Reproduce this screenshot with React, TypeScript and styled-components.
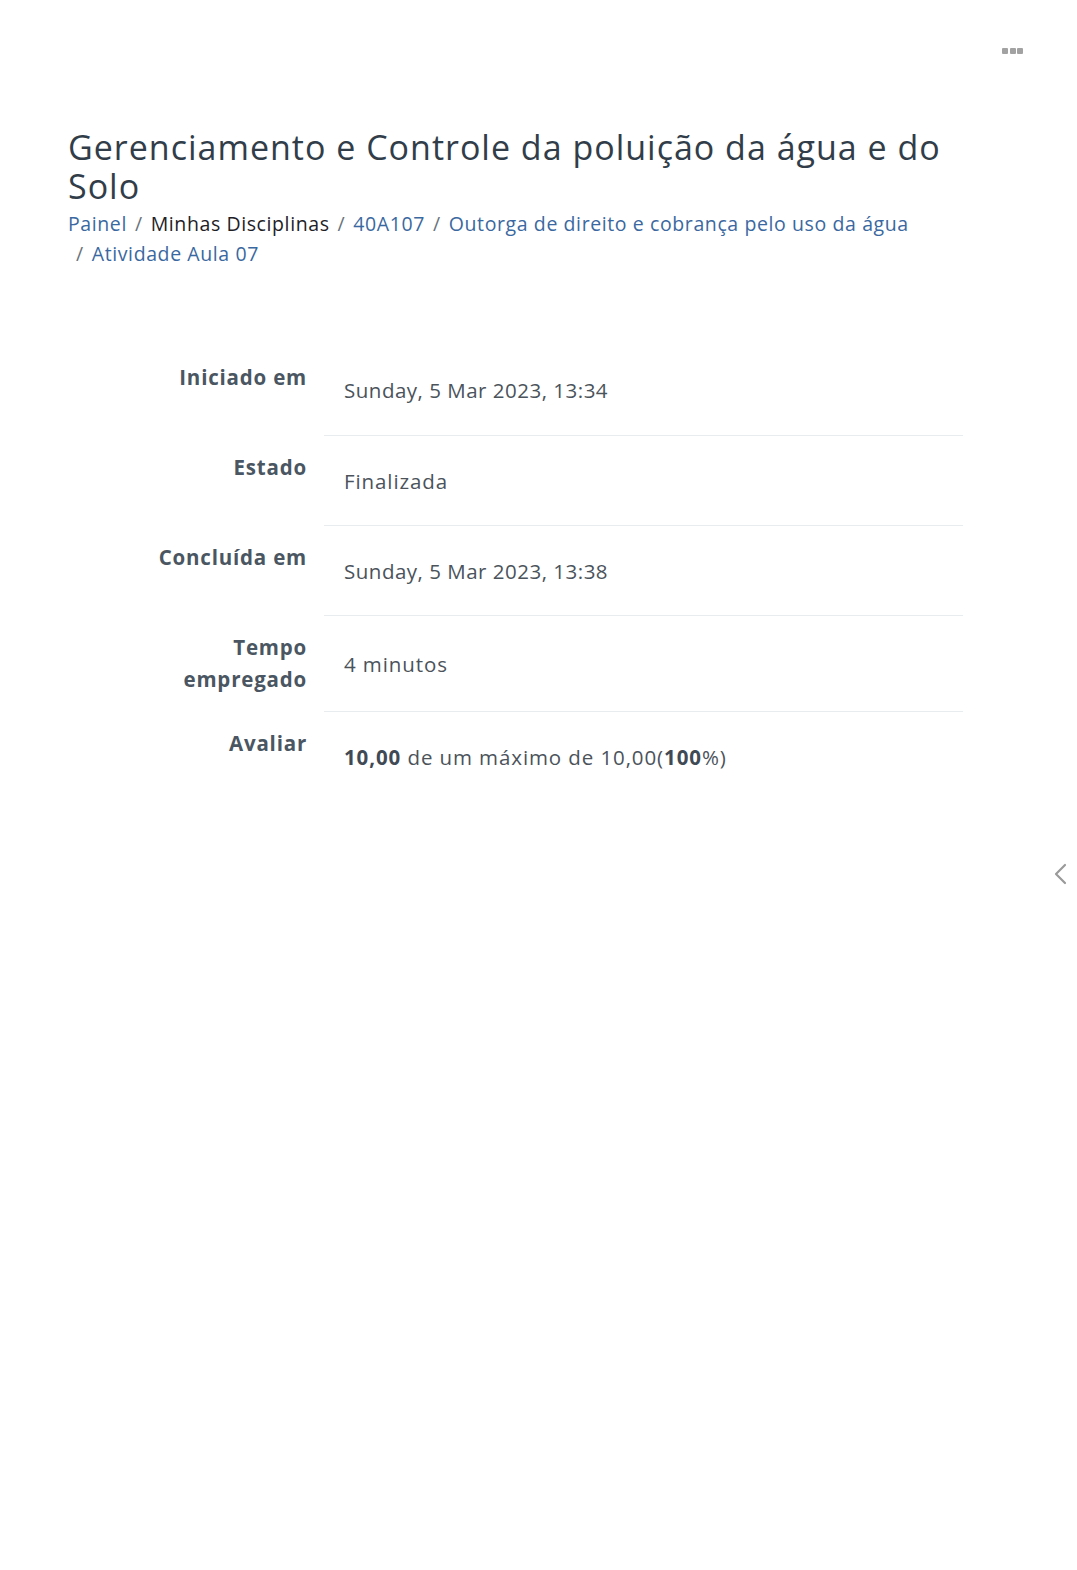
import styled, { createGlobalStyle } from 'styled-components';
import { Fragment } from 'react';

const GlobalStyle = createGlobalStyle`
  html, body {
    margin: 0;
    padding: 0;
    background: #ffffff;
  }
  body {
    font-family: "Open Sans", "Liberation Sans", sans-serif;
    color: #495057;
  }
`;

const Page = styled.div`
  position: relative;
  width: 1077px;
  min-height: 1570px;
  background: #ffffff;
`;

const TopBar = styled.header`
  display: flex;
  justify-content: flex-end;
  padding: 48px 54px 0 0;
  height: 80px;
  box-sizing: border-box;
`;

const DotsButton = styled.button`
  display: flex;
  gap: 1.3px;
  padding: 0;
  border: none;
  background: transparent;
  height: 6px;
  cursor: pointer;
`;

const Dot = styled.span`
  display: block;
  width: 6px;
  height: 6px;
  background: #a2a2a2;
  border-radius: 1px;
`;

const Main = styled.main`
  padding: 48px 114px 0 68px;
`;

const Title = styled.h1`
  margin: 0;
  font-size: 34px;
  line-height: 39px;
  font-weight: 400;
  letter-spacing: 1px;
  color: #313d49;
  max-width: 890px;
`;

const Breadcrumb = styled.ol`
  display: flex;
  flex-wrap: wrap;
  list-style: none;
  margin: 3px 0 0;
  padding: 0;
  font-size: 19.5px;
  line-height: 30px;
  letter-spacing: 0.6px;
  max-width: 880px;
`;

const CrumbItem = styled.li`
  display: flex;
  white-space: nowrap;
`;

const Crumb = styled.span<{ $link?: boolean }>`
  color: ${({ $link }) => ($link ? '#3a68a0' : '#1d2125')};
`;

const Sep = styled.span`
  color: #6a737b;
  padding: 0 8px;
`;

const SummaryTable = styled.div`
  margin: 76px 0 0 72px;
  width: 823px;
  display: grid;
  grid-template-columns: 184px 1fr;
`;

const Label = styled.div`
  text-align: right;
  font-weight: 700;
  font-size: 20.5px;
  line-height: 32px;
  letter-spacing: 0.8px;
  color: #4a5662;
  padding: 16px 17px 16px 0;
`;

const Value = styled.div<{ $first?: boolean; $tight?: boolean }>`
  display: flex;
  align-items: center;
  min-height: 90px;
  box-sizing: border-box;
  padding: 0 20px;
  font-size: 20.5px;
  line-height: 32px;
  letter-spacing: ${({ $tight }) => ($tight ? '0.5px' : '0.9px')};
  color: #4b535b;
  border-top: ${({ $first }) => ($first ? 'none' : '1px solid #e9ecef')};
`;

const Strong = styled.b`
  font-weight: 700;
  color: #3f4a55;
`;

const DrawerToggle = styled.button`
  position: absolute;
  top: 862px;
  right: 8px;
  width: 16px;
  height: 24px;
  padding: 0;
  border: none;
  background: transparent;
  cursor: pointer;
`;

const crumbs = [
  { text: 'Painel', link: true },
  { text: 'Minhas Disciplinas', link: false },
  { text: '40A107', link: true },
  { text: 'Outorga de direito e cobrança pelo uso da água', link: true },
  { text: 'Atividade Aula 07', link: true },
];

const rows: { label: React.ReactNode; value: React.ReactNode; tight?: boolean }[] = [
  { label: 'Iniciado em', value: 'Sunday, 5 Mar 2023, 13:34', tight: true },
  { label: 'Estado', value: 'Finalizada' },
  { label: 'Concluída em', value: 'Sunday, 5 Mar 2023, 13:38', tight: true },
  {
    label: (
      <>
        Tempo
        <br />
        empregado
      </>
    ),
    value: '4 minutos',
  },
  {
    label: 'Avaliar',
    value: (
      <span>
        <Strong>10,00</Strong> de um máximo de 10,00(<Strong>100</Strong>%)
      </span>
    ),
  },
];

export default function App() {
  return (
    <Page>
      <GlobalStyle />
      <TopBar>
        <DotsButton aria-label="Mais">
          <Dot />
          <Dot />
          <Dot />
        </DotsButton>
      </TopBar>
      <Main>
        <Title>Gerenciamento e Controle da poluição da água e do Solo</Title>
        <Breadcrumb>
          {crumbs.map((c, i) => (
            <CrumbItem key={c.text}>
              {i > 0 && <Sep>/</Sep>}
              <Crumb $link={c.link}>{c.text}</Crumb>
            </CrumbItem>
          ))}
        </Breadcrumb>
        <SummaryTable>
          {rows.map((row, i) => (
            <Fragment key={i}>
              <Label>{row.label}</Label>
              <Value $first={i === 0} $tight={row.tight}>
                {row.value}
              </Value>
            </Fragment>
          ))}
        </SummaryTable>
      </Main>
      <DrawerToggle aria-label="Abrir bloco">
        <svg width="16" height="24" viewBox="0 0 16 24" fill="none">
          <path d="M12 3 L3 12 L12 21" stroke="#9a9a9a" strokeWidth="2.2" strokeLinecap="round" strokeLinejoin="round" />
        </svg>
      </DrawerToggle>
    </Page>
  );
}
